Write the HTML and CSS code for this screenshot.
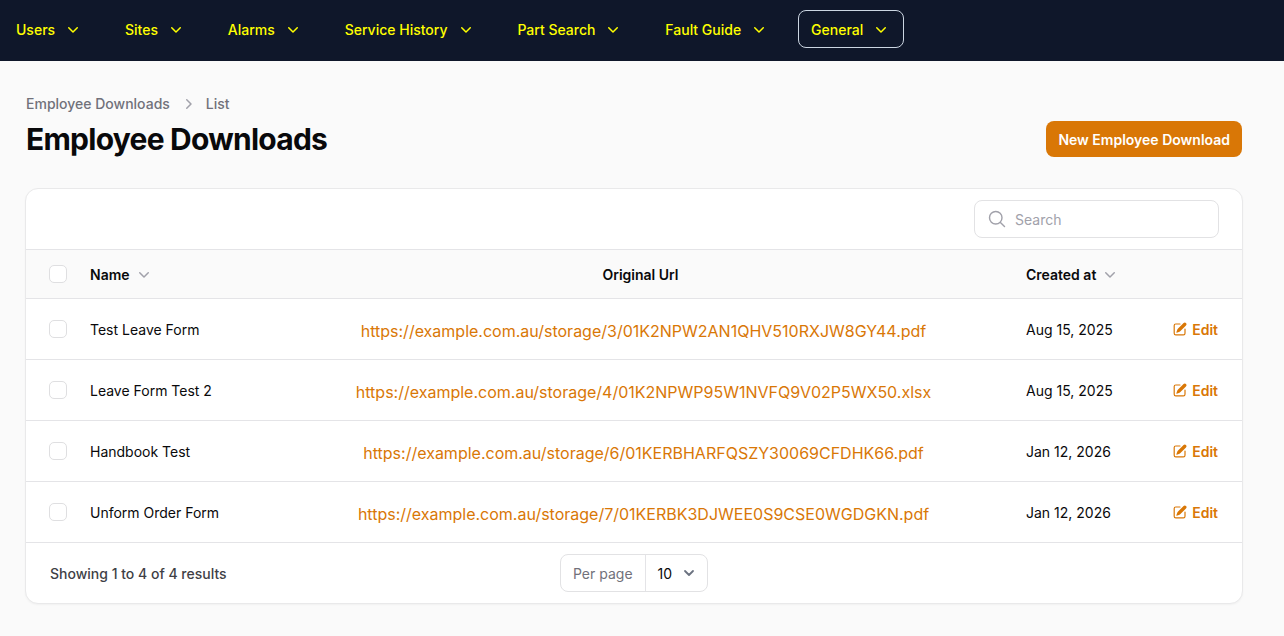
FILE: index.html
```html
<!DOCTYPE html>
<html lang="en">
<head>
	<meta charset="UTF-8">
	<meta name="viewport" content="width=device-width, initial-scale=1.0">
	<title>Employee Downloads</title>
	<link rel="stylesheet" href="styles.css">
</head>
<body>
	<!-- shared icons -->
	<svg class="sprite" width="0" height="0">
		<symbol id="chevron" viewBox="0 0 20 20">
			<path fill-rule="evenodd" clip-rule="evenodd" d="M5.22 8.22a.75.75 0 0 1 1.06 0L10 11.94l3.72-3.72a.75.75 0 1 1 1.06 1.06l-4.25 4.25a.75.75 0 0 1-1.06 0L5.22 9.28a.75.75 0 0 1 0-1.06Z"/>
		</symbol>
		<symbol id="edit" viewBox="0 0 20 20">
			<path d="m5.433 13.917 1.262-3.155A4 4 0 0 1 7.58 9.42l6.92-6.918a2.121 2.121 0 0 1 3 3l-6.92 6.918c-.383.383-.84.685-1.343.886l-3.154 1.262a.5.5 0 0 1-.65-.65Z"/>
			<path d="M3.5 5.75c0-.69.56-1.25 1.25-1.25H10A.75.75 0 0 0 10 3H4.75A2.75 2.75 0 0 0 2 5.75v9.5A2.75 2.75 0 0 0 4.75 18h9.5A2.75 2.75 0 0 0 17 15.25V10a.75.75 0 0 0-1.5 0v5.25c0 .69-.56 1.25-1.25 1.25h-9.5c-.69 0-1.25-.56-1.25-1.25v-9.5Z"/>
		</symbol>
	</svg>

	<nav class="topbar">
		<a class="nav-item">Users<svg class="nav-icon"><use href="#chevron"/></svg></a>
		<a class="nav-item">Sites<svg class="nav-icon"><use href="#chevron"/></svg></a>
		<a class="nav-item">Alarms<svg class="nav-icon"><use href="#chevron"/></svg></a>
		<a class="nav-item">Service History<svg class="nav-icon"><use href="#chevron"/></svg></a>
		<a class="nav-item">Part Search<svg class="nav-icon"><use href="#chevron"/></svg></a>
		<a class="nav-item">Fault Guide<svg class="nav-icon"><use href="#chevron"/></svg></a>
		<a class="nav-item active">General<svg class="nav-icon"><use href="#chevron"/></svg></a>
	</nav>

	<main class="page">
		<header class="page-header">
			<div>
				<div class="breadcrumbs">
					<span>Employee Downloads</span>
					<svg class="crumb-icon"><use href="#chevron"/></svg>
					<span>List</span>
				</div>
				<h1>Employee Downloads</h1>
			</div>
			<button class="btn">New Employee Download</button>
		</header>

		<section class="card">
			<div class="toolbar">
				<label class="search">
					<svg class="search-icon" viewBox="0 0 24 24"><path d="m21 21-5.197-5.197m0 0A7.5 7.5 0 1 0 5.196 5.196a7.5 7.5 0 0 0 10.607 10.607Z"/></svg>
					<input type="text" placeholder="Search">
				</label>
			</div>

			<table>
				<thead>
					<tr>
						<th class="col-check"><input type="checkbox" class="check"></th>
						<th class="col-name"><span class="sort">Name<svg class="sort-icon"><use href="#chevron"/></svg></span></th>
						<th class="col-url">Original Url</th>
						<th class="col-date"><span class="sort">Created at<svg class="sort-icon"><use href="#chevron"/></svg></span></th>
						<th class="col-action"></th>
					</tr>
				</thead>
				<tbody>
					<tr>
						<td class="col-check"><input type="checkbox" class="check"></td>
						<td class="col-name">Test Leave Form</td>
						<td class="col-url"><a class="link">https://example.com.au/storage/3/01K2NPW2AN1QHV510RXJW8GY44.pdf</a></td>
						<td class="col-date">Aug 15, 2025</td>
						<td class="col-action"><a class="edit"><svg class="edit-icon"><use href="#edit"/></svg>Edit</a></td>
					</tr>
					<tr>
						<td class="col-check"><input type="checkbox" class="check"></td>
						<td class="col-name">Leave Form Test 2</td>
						<td class="col-url"><a class="link">https://example.com.au/storage/4/01K2NPWP95W1NVFQ9V02P5WX50.xlsx</a></td>
						<td class="col-date">Aug 15, 2025</td>
						<td class="col-action"><a class="edit"><svg class="edit-icon"><use href="#edit"/></svg>Edit</a></td>
					</tr>
					<tr>
						<td class="col-check"><input type="checkbox" class="check"></td>
						<td class="col-name">Handbook Test</td>
						<td class="col-url"><a class="link">https://example.com.au/storage/6/01KERBHARFQSZY30069CFDHK66.pdf</a></td>
						<td class="col-date">Jan 12, 2026</td>
						<td class="col-action"><a class="edit"><svg class="edit-icon"><use href="#edit"/></svg>Edit</a></td>
					</tr>
					<tr>
						<td class="col-check"><input type="checkbox" class="check"></td>
						<td class="col-name">Unform Order Form</td>
						<td class="col-url"><a class="link">https://example.com.au/storage/7/01KERBK3DJWEE0S9CSE0WGDGKN.pdf</a></td>
						<td class="col-date">Jan 12, 2026</td>
						<td class="col-action"><a class="edit"><svg class="edit-icon"><use href="#edit"/></svg>Edit</a></td>
					</tr>
				</tbody>
			</table>

			<footer class="pagination">
				<span class="overview">Showing 1 to 4 of 4 results</span>
				<div class="per-page">
					<span class="per-page-label">Per page</span>
					<span class="per-page-value">10
						<svg class="select-icon" viewBox="0 0 20 20"><path d="m6 8 4 4 4-4"/></svg>
					</span>
				</div>
			</footer>
		</section>
	</main>
</body>
</html>
```

FILE: styles.css
```css
* {
	box-sizing: border-box;
	padding: 0;
	margin: 0;
}
body {
	min-height: 100vh;
	background-color: #fafafa;
	color: #09090b;
	font-family: Inter, "Liberation Sans", sans-serif;
	font-size: 14px;
	line-height: 20px;
}
svg {
	fill: currentColor;
	flex-shrink: 0;
}
.sprite {
	display: none;
}
button,
input {
	font: inherit;
}

/* top navigation */
.topbar {
	display: flex;
	align-items: center;
	gap: 15.9px;
	height: 61px;
	padding: 0 3px 3px;
	background-color: #0f172a;
}
.nav-item {
	display: flex;
	align-items: center;
	gap: 8px;
	height: 38px;
	padding: 2px 12px 0;
	border: 1px solid transparent;
	border-radius: 8px;
	color: #ffff00;
	font-weight: 500;
	white-space: nowrap;
}
.nav-item.active {
	border-color: #cbd5e1;
}
.nav-icon {
	width: 20px;
	height: 20px;
	margin-top: -2px;
}

/* page heading */
.page {
	padding: 33px 42px 0 26px;
}
.page-header {
	display: flex;
	justify-content: space-between;
	align-items: flex-end;
	height: 64px;
}
.breadcrumbs {
	display: flex;
	align-items: center;
	gap: 8px;
	margin-bottom: 7px;
	color: #71717a;
	font-weight: 500;
}
.crumb-icon {
	width: 20px;
	height: 20px;
	color: #a1a1aa;
	transform: rotate(-90deg);
}
h1 {
	padding-bottom: 1px;
	font-size: 30px;
	line-height: 36px;
	font-weight: 700;
	letter-spacing: -0.75px;
}
.btn {
	height: 36px;
	margin-bottom: 1px;
	padding: 2px 12px 0;
	border: none;
	border-radius: 8px;
	background-color: #d97706;
	color: #fff;
	font-weight: 600;
}

/* table card */
.card {
	margin: 30px -1px 0;
	border: 1px solid #e9e9ea;
	border-radius: 13px;
	background-color: #fff;
	box-shadow: 0 1px 2px rgba(0, 0, 0, 0.04);
}
.toolbar {
	display: flex;
	justify-content: flex-end;
	height: 60px;
	padding: 11px 23px 0 0;
}
.search {
	display: flex;
	align-items: center;
	width: 245px;
	height: 38px;
	padding: 0 12px;
	border: 1px solid #e2e2e4;
	border-radius: 8px;
}
.search-icon {
	width: 20px;
	height: 20px;
	fill: none;
	stroke: #a1a1aa;
	stroke-width: 1.7;
	stroke-linecap: round;
}
.search input {
	width: 100%;
	margin-left: 8px;
	padding-top: 2px;
	border: none;
	outline: none;
	background: none;
}
.search input::placeholder {
	color: #a1a1aa;
}
table {
	width: 100%;
	border-collapse: separate;
	border-spacing: 0;
	table-layout: fixed;
}
th {
	height: 50px;
	border-top: 1px solid #e4e4e7;
	border-bottom: 1px solid #e4e4e7;
	background-color: #fafafa;
	font-weight: 600;
	text-align: left;
	white-space: nowrap;
}
td {
	height: 61px;
	padding-top: 2px;
	border-bottom: 1px solid #e4e4e7;
}
th.col-check,
td.col-check {
	width: 52px;
	padding: 0 0 0 23px;
}
.col-name {
	width: 254px;
	padding-left: 12px;
}
.col-url {
	width: 617px;
	text-align: center;
}
.col-date {
	width: 170px;
	padding-left: 77px;
}
.col-action {
	padding-right: 24px;
}
th.col-name,
th.col-url,
th.col-date {
	padding-top: 2px;
}
.check {
	appearance: none;
	display: block;
	width: 18px;
	height: 18px;
	border: 1px solid #dfdfe1;
	border-radius: 5px;
	background-color: #fff;
}
.sort {
	display: flex;
	align-items: center;
	gap: 4px;
}
.sort-icon {
	width: 20px;
	height: 20px;
	margin-top: -2px;
	color: #a1a1aa;
}
.link {
	padding-left: 6px;
	color: #d97706;
	font-size: 16px;
	line-height: 24px;
}
td.col-url {
	padding-top: 3px;
}
.edit {
	display: flex;
	align-items: center;
	justify-content: flex-end;
	gap: 4px;
	color: #d97706;
	font-weight: 600;
}
.edit-icon {
	width: 16px;
	height: 16px;
	margin-top: -2px;
}

/* pagination */
.pagination {
	display: grid;
	grid-template-columns: 1fr auto 1fr;
	align-items: center;
	height: 60px;
	padding: 0 24px;
}
.overview {
	padding-top: 2px;
	color: #3f3f46;
	font-weight: 500;
}
.per-page {
	display: flex;
	width: 148px;
	height: 38px;
	border: 1px solid #e2e2e4;
	border-radius: 8px;
	white-space: nowrap;
}
.per-page-label,
.per-page-value {
	display: flex;
	align-items: center;
	padding: 2px 0 0 12px;
}
.per-page-label {
	padding-right: 12px;
	border-right: 1px solid #e4e4e7;
	color: #71717a;
}
.per-page-value {
	gap: 7px;
}
.select-icon {
	width: 20px;
	height: 20px;
	margin-top: -2px;
	fill: none;
	stroke: #6b7280;
	stroke-width: 1.8;
	stroke-linecap: round;
	stroke-linejoin: round;
}
```
